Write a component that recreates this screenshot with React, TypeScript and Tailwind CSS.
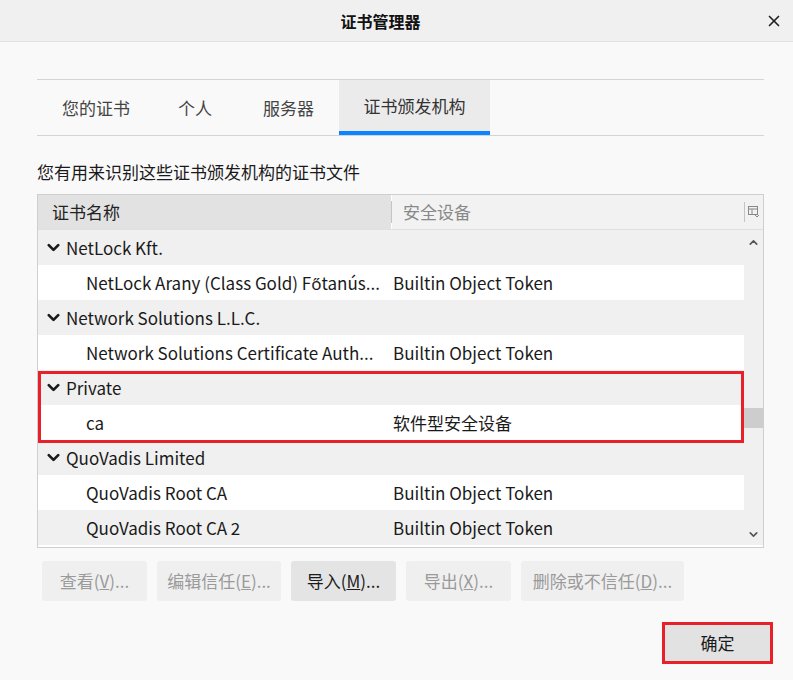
import { ChevronDown, ChevronUp, X } from 'lucide-react'

const FONT = { fontFamily: '"Noto Sans CJK SC", "Noto Sans", sans-serif' }

type Row = { name: string; device?: string; group?: boolean }

const rows: Row[] = [
  { name: 'NetLock Kft.', group: true },
  { name: 'NetLock Arany (Class Gold) Főtanús...', device: 'Builtin Object Token' },
  { name: 'Network Solutions L.L.C.', group: true },
  { name: 'Network Solutions Certificate Auth...', device: 'Builtin Object Token' },
  { name: 'Private', group: true },
  { name: 'ca', device: '软件型安全设备' },
  { name: 'QuoVadis Limited', group: true },
  { name: 'QuoVadis Root CA', device: 'Builtin Object Token' },
  { name: 'QuoVadis Root CA 2', device: 'Builtin Object Token' },
]

function TreeRow({ row, idx }: { row: Row; idx: number }) {
  const bg = idx % 2 === 0 ? 'bg-[#f0f0f0]' : 'bg-white'
  return (
    <div className={`flex h-[35px] items-center text-[17px] text-[#1a1a1a] ${bg}`}>
      {row.group ? (
        <div className="flex items-center pl-[6px]">
          <ChevronDown size={19} strokeWidth={3.4} className="mr-[3px] text-[#1a1a1a]" />
          <span>{row.name}</span>
        </div>
      ) : (
        <>
          <div className="w-[355px] truncate pl-[48px]">{row.name}</div>
          <div>{row.device}</div>
        </>
      )}
    </div>
  )
}

function Btn({ label, k, rest, enabled, w }: { label: string; k: string; rest: string; enabled?: boolean; w: string }) {
  return (
    <div
      className={`flex h-[40px] ${w} items-center justify-center rounded-[3px] text-[17px] ${
        enabled ? 'bg-[#e4e4e4] text-[#1a1a1a]' : 'bg-[#efefef] text-[#9a9a9a]'
      }`}
    >
      {label}(<span className="underline">{k}</span>){rest}
    </div>
  )
}

export default function App() {
  return (
    <div className="h-[680px] w-[793px] overflow-hidden bg-[#f9f9f9]" style={FONT}>
      <div className="relative flex h-[42px] items-center justify-center border-b border-[#e2e2e2] bg-[#f0f0f0] pr-[32px]">
        <span className="text-[16px] font-bold text-[#111]">证书管理器</span>
        <X size={18} strokeWidth={2.2} className="absolute right-[10px] top-[12px] text-[#222]" />
      </div>

      <div className="pl-[37px] pr-[29px] pt-[37px]">
        <div className="flex h-[57px] border-y border-[#d4d4d4]">
          <div className="flex items-center pl-[25px] text-[17px] text-[#444]">您的证书</div>
          <div className="flex items-center pl-[48px] text-[17px] text-[#444]">个人</div>
          <div className="flex items-center pl-[51px] text-[17px] text-[#444]">服务器</div>
          <div className="ml-[25px] flex w-[151px] flex-col bg-[#ebebeb]">
            <div className="flex flex-1 items-center justify-center text-[17px] text-[#333]">证书颁发机构</div>
            <div className="h-[4px] bg-[#0a84ff]" />
          </div>
        </div>

        <div className="mt-[24px] text-[17px] leading-[24px] text-[#1a1a1a]">您有用来识别这些证书颁发机构的证书文件</div>

        <div className="mt-[10px] h-[354px] border border-[#cfcfcf] bg-white">
          <div className="flex h-[35px] border-b border-[#e0e0e0] text-[17px]">
            <div className="flex w-[353px] items-center bg-[#e2e2e2] pl-[14px] text-[#222]">证书名称</div>
            <div className="my-[6px] w-px bg-[#c4c4c4]" />
            <div className="flex flex-1 items-center bg-[#f2f2f2] pl-[11px] text-[#888]">安全设备</div>
            <div className="flex w-[19px] items-center bg-[#f2f2f2]">
              <div className="h-[20px] w-px bg-[#c4c4c4]" />
              <svg width="12" height="12" viewBox="0 0 12 12" className="ml-[3px]" fill="none" stroke="#888" strokeWidth="1">
                <rect x="0.5" y="0.5" width="9" height="8" />
                <line x1="0.5" y1="3" x2="9.5" y2="3" />
                <line x1="4" y1="3" x2="4" y2="8.5" />
                <path d="M7 9 L9 11 L11 9" />
              </svg>
            </div>
          </div>
          <div className="flex">
            <div className="relative flex-1">
              {rows.map((r, i) => (
                <TreeRow key={r.name} row={r} idx={i} />
              ))}
              <div className="pointer-events-none absolute inset-x-0 top-[141px] h-[72px] border-[3px] border-[#e8202a]" />
            </div>
            <div className="relative flex w-[19px] flex-col items-center bg-[#f0f0f0]">
              <ChevronUp size={13} strokeWidth={3} className="mt-[6px] text-[#555]" />
              <div className="mt-[159px] h-[20px] w-[19px] bg-[#cdcdcd]" />
              <div className="flex-1" />
              <ChevronDown size={13} strokeWidth={3} className="mb-[4px] text-[#555]" />
            </div>
          </div>
        </div>
      </div>

      <div className="flex gap-[10px] pl-[42px] pt-[13px]">
        <Btn label="查看" k="V" rest="..." w="w-[105px]" />
        <Btn label="编辑信任" k="E" rest="..." w="w-[124px]" />
        <Btn label="导入" k="M" rest="..." enabled w="w-[105px]" />
        <Btn label="导出" k="X" rest="..." w="w-[105px]" />
        <Btn label="删除或不信任" k="D" rest="..." w="w-[163px]" />
      </div>

      <div className="flex justify-end pr-[20px] pt-[21px]">
        <div className="flex h-[42px] w-[111px] items-center justify-center border-[3px] border-[#e8202a] bg-[#e2e2e2] text-[17px] text-[#1a1a1a]">
          确定
        </div>
      </div>
    </div>
  )
}
